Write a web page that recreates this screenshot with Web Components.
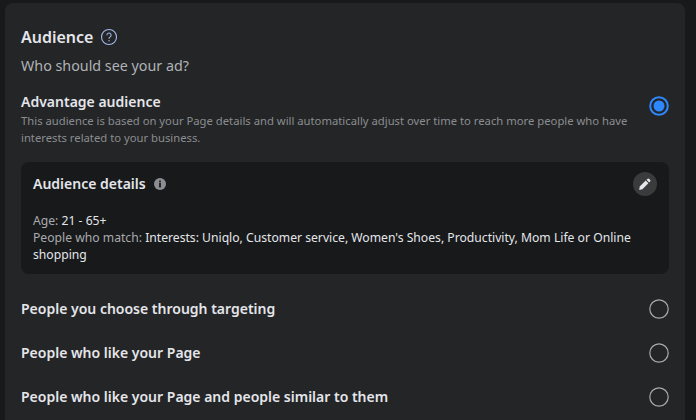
<!DOCTYPE html>
<html>
<head>
<meta charset="utf-8">
<style>
  html, body { margin: 0; height: 100%; background: #18191a; overflow: hidden; }
  body { font-family: "Noto Sans", "Open Sans", sans-serif; }
</style>
</head>
<body>
<audience-panel>
  <audience-choice selected>
    <span slot="label">Advantage audience</span>
    <span slot="hint">This audience is based on your Page details and will automatically adjust over time to reach more people who have interests related to your business.</span>
  </audience-choice>
  <audience-details></audience-details>
  <audience-choice class="row">
    <span slot="label">People you choose through targeting</span>
  </audience-choice>
  <audience-choice class="row">
    <span slot="label">People who like your Page</span>
  </audience-choice>
  <audience-choice class="row">
    <span slot="label">People who like your Page and people similar to them</span>
  </audience-choice>
</audience-panel>

<script>
class AudiencePanel extends HTMLElement {
  constructor() {
    super();
    this.attachShadow({ mode: 'open' }).innerHTML = `
      <style>
        :host {
          display: block;
          box-sizing: border-box;
          margin: 3px 11px 0 5px;
          height: 417px;
          padding: 16px;
          background: #242526;
          border-radius: 8px 8px 0 0;
          color: #e4e6eb;
        }
        .title { display: flex; align-items: center; gap: 7px; height: 36px; }
        h2 { margin: 0; font-size: 16px; font-weight: 600; line-height: 36px; }
        svg { display: block; }
        .sub { margin: 1px 0 0; font-size: 14.3px; line-height: 20px; color: #b0b3b8; }
        .body { margin-top: 16px; display: block; }
      </style>
      <div class="title">
        <h2>Audience</h2>
        <svg width="18" height="18" viewBox="0 0 18 18" fill="none">
          <circle cx="9" cy="9" r="7.5" stroke="#a3b8ee" stroke-width="1.1"/>
          <path d="M6.9 7.2a2.1 2.1 0 1 1 3.3 1.7c-.8.5-1.2.9-1.2 1.8" stroke="#a3b8ee" stroke-width="1.1"/>
          <circle cx="9" cy="12.7" r=".7" fill="#a3b8ee"/>
        </svg>
      </div>
      <p class="sub">Who should see your ad?</p>
      <div class="body"><slot></slot></div>`;
  }
}

class AudienceChoice extends HTMLElement {
  constructor() {
    super();
    const selected = this.hasAttribute('selected');
    const dot = selected
      ? `<circle cx="10" cy="10" r="8.8" fill="none" stroke="#2d88ff" stroke-width="2"/><circle cx="10" cy="10" r="5.5" fill="#2d88ff"/>`
      : `<circle cx="10" cy="10" r="9.2" fill="none" stroke="#a8abaf" stroke-width="1.2"/>`;
    this.attachShadow({ mode: 'open' }).innerHTML = `
      <style>
        :host { display: flex; align-items: ${selected ? 'flex-start' : 'center'}; gap: 12px; color: #e4e6eb; }
        :host(.row) { height: 44px; }
        .text { flex: 1; min-width: 0; }
        .label { font-size: 14px; font-weight: 600; line-height: 20px; }
        .hint { font-size: 11.28px; line-height: 17px; color: #8a8d91; }
        .radio { flex: none; width: 20px; height: 20px; ${selected ? 'margin-top: 4px;' : ''} }
        svg { display: block; }
      </style>
      <div class="text">
        <div class="label"><slot name="label"></slot></div>
        <div class="hint"><slot name="hint"></slot></div>
      </div>
      <div class="radio"><svg width="20" height="20" viewBox="0 0 20 20">${dot}</svg></div>`;
    if (!selected) this.shadowRoot.querySelector('.hint').remove();
  }
}

class AudienceDetails extends HTMLElement {
  constructor() {
    super();
    this.attachShadow({ mode: 'open' }).innerHTML = `
      <style>
        :host {
          display: block;
          box-sizing: border-box;
          height: 112px;
          margin: 16px 0 13px;
          padding: 10px 12px;
          background: #18191a;
          border-radius: 8px;
          font-size: 12.17px;
          line-height: 17px;
          color: #e4e6eb;
        }
        .head { display: flex; align-items: center; gap: 8px; height: 24px; margin-bottom: 16px; }
        h3 { margin: 0; font-size: 14px; font-weight: 600; line-height: 24px; }
        .edit {
          margin-left: auto; width: 24px; height: 24px; border-radius: 50%;
          background: #3a3b3c; display: flex; align-items: center; justify-content: center;
        }
        svg { display: block; }
        .k { color: #a8abaf; }
      </style>
      <div class="head">
        <h3>Audience details</h3>
        <svg width="12" height="12" viewBox="0 0 12 12">
          <circle cx="6" cy="6" r="6" fill="#8a8d91"/>
          <rect x="5.1" y="5" width="1.8" height="4.4" fill="#18191a"/>
          <rect x="5.1" y="2.6" width="1.8" height="1.7" fill="#18191a"/>
        </svg>
        <div class="edit">
          <svg width="14" height="14" viewBox="0 0 14 14" fill="#e4e6eb">
            <path d="M9.4 1.9a1.3 1.3 0 0 1 1.9 0l.8.8a1.3 1.3 0 0 1 0 1.9l-.9.9-2.7-2.7zM7.7 3.6l2.7 2.7-6 6-3.2.6.5-3.3z"/>
          </svg>
        </div>
      </div>
      <div><span class="k">Age:</span> 21 - 65+</div>
      <div><span class="k">People who match:</span> Interests: Uniqlo, Customer service, Women's Shoes, Productivity, Mom Life or Online shopping</div>`;
  }
}

customElements.define('audience-panel', AudiencePanel);
customElements.define('audience-choice', AudienceChoice);
customElements.define('audience-details', AudienceDetails);
</script>
</body>
</html>
